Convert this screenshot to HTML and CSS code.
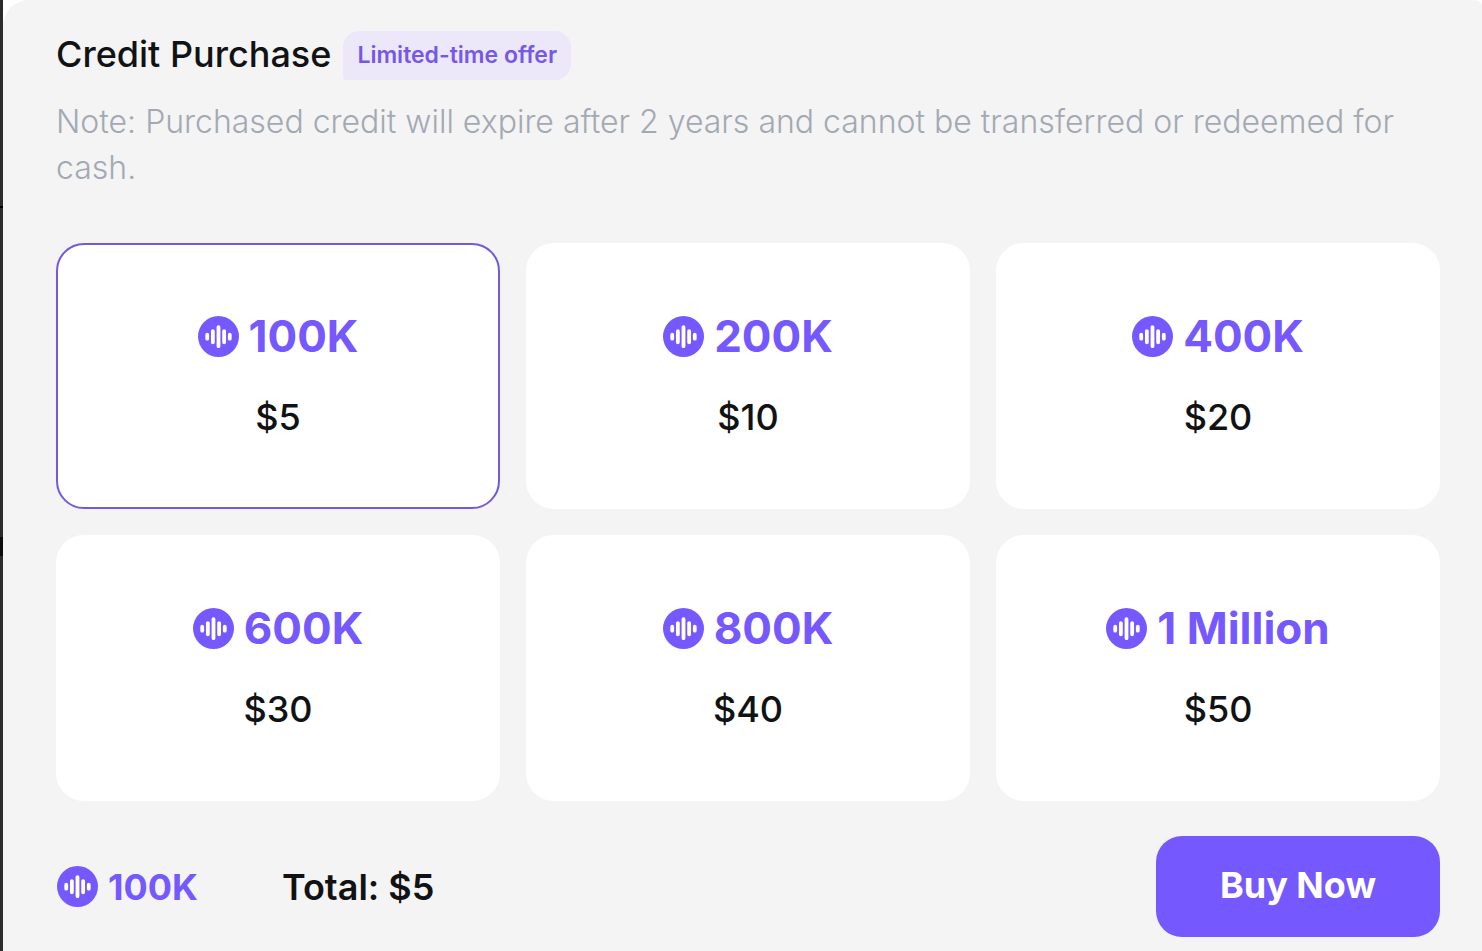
FILE: index.html
```html
<!DOCTYPE html>
<html lang="en">
<head>
<meta charset="utf-8">
<title>Credit Purchase</title>
<link rel="stylesheet" href="styles.css">
</head>
<body>
<svg class="defs" aria-hidden="true">
  <symbol id="coin" viewBox="0 0 40 40">
    <circle cx="20" cy="20" r="20" fill="#7559ff"/>
    <path d="M9 18.300v3.800M14.500 14.700v11M20 10.800v18.600M25.500 14.700v11M31 18.300v3.800" stroke="#fff" stroke-width="3.700" stroke-linecap="round"/>
  </symbol>
</svg>
<form class="sheet">
  <header class="header">
    <div class="heading">
      <h1 class="title">Credit Purchase</h1>
      <span class="tag">Limited-time offer</span>
    </div>
    <p class="note">Note: Purchased credit will expire after 2 years and cannot be transferred or redeemed for cash.</p>
  </header>
  <div class="plans" role="radiogroup" aria-label="Credit amount">
    <label class="plan"><input class="plan-input" type="radio" name="plan" checked><span class="amount"><svg class="coin"><use href="#coin"/></svg>100K</span><span class="price">$5</span></label>
    <label class="plan"><input class="plan-input" type="radio" name="plan"><span class="amount"><svg class="coin"><use href="#coin"/></svg>200K</span><span class="price">$10</span></label>
    <label class="plan"><input class="plan-input" type="radio" name="plan"><span class="amount"><svg class="coin"><use href="#coin"/></svg>400K</span><span class="price">$20</span></label>
    <label class="plan"><input class="plan-input" type="radio" name="plan"><span class="amount"><svg class="coin"><use href="#coin"/></svg>600K</span><span class="price">$30</span></label>
    <label class="plan"><input class="plan-input" type="radio" name="plan"><span class="amount"><svg class="coin"><use href="#coin"/></svg>800K</span><span class="price">$40</span></label>
    <label class="plan"><input class="plan-input" type="radio" name="plan"><span class="amount"><svg class="coin"><use href="#coin"/></svg>1 Million</span><span class="price">$50</span></label>
  </div>
  <footer class="footer">
    <span class="amount amount-small"><svg class="coin"><use href="#coin"/></svg>100K</span>
    <span class="total">Total: $5</span>
    <button class="buy" type="button">Buy Now</button>
  </footer>
</form>
</body>
</html>
```
FILE: styles.css
```css
* {
  box-sizing: border-box;
}

body {
  margin: 0;
  min-height: 100vh;
  padding-left: 3px;
  /* Dimmed page showing past the sheet's left edge */
  background:
    linear-gradient(#000, #000) 0 206px / 3px 2px no-repeat,
    linear-gradient(#0c0c0d, #0c0c0d) 0 537px / 3px 19px no-repeat,
    linear-gradient(#2b2b2d, #2b2b2d) 0 0 / 3px 100% no-repeat,
    #fff;
  color: #111214;
  font-family: Inter, "Liberation Sans", sans-serif;
}

.defs {
  display: none;
}

.sheet {
  min-height: 100vh;
  padding: 30px 42px 14px 53px;
  border-radius: 26px 10px 0 0 / 26px 5px 0 0;
  background: #f4f4f4;
}

.heading {
  display: flex;
  align-items: flex-end;
  gap: 12px;
}

.title {
  margin: 0;
  padding-bottom: 2px;
  font-size: 36px;
  font-weight: 500;
  line-height: 48px;
}

.tag {
  padding: 0 14px;
  border-radius: 16px 16px 16px 3px;
  background: #ece8fa;
  color: #7559e6;
  font-size: 23px;
  font-weight: 600;
  line-height: 49px;
}

.note {
  margin: 19px 0 0;
  color: #a3a9b3;
  font-size: 32px;
  font-weight: 300;
  line-height: 46px;
}

.plans {
  display: grid;
  grid-template-columns: repeat(3, 1fr);
  gap: 26px;
  margin-top: 52px;
}

.plan {
  position: relative;
  display: flex;
  flex-direction: column;
  align-items: center;
  gap: 30px;
  padding: 64px 0 66px;
  border: 2px solid #fff;
  border-radius: 28px;
  background: #fff;
  cursor: pointer;
}

.plan:has(:checked) {
  border-color: #7559dc;
}

.plan-input {
  position: absolute;
  inset: 0;
  margin: 0;
  opacity: 0;
  cursor: pointer;
}

.amount {
  display: flex;
  align-items: center;
  gap: 10px;
  color: #7559ff;
  font-size: 44px;
  font-weight: 700;
  line-height: 54px;
}

.amount-small {
  font-size: 36px;
}

.coin {
  flex: none;
  width: 41px;
  height: 41px;
}

.price {
  font-size: 36px;
  font-weight: 500;
  line-height: 48px;
}

.footer {
  display: flex;
  align-items: center;
  gap: 84px;
  margin-top: 35px;
  padding-left: 1px;
}

.total {
  font-size: 36px;
  font-weight: 600;
}

.buy {
  margin-left: auto;
  padding: 27px 64px 29px;
  border: 0;
  border-radius: 26px;
  background: #7559ff;
  color: #fff;
  font: 700 36px/45px Inter, "Liberation Sans", sans-serif;
  cursor: pointer;
}
```
